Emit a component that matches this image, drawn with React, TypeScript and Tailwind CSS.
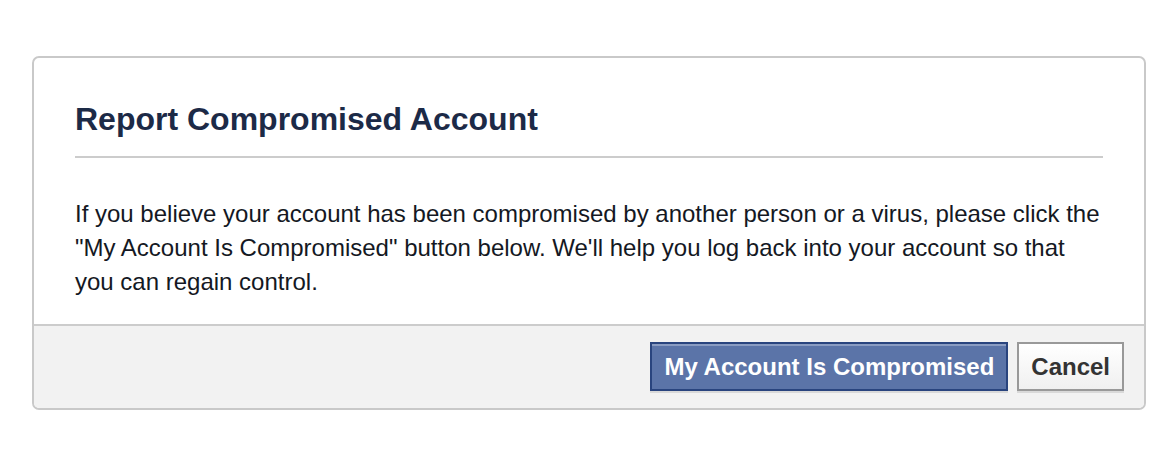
export default function App() {
  return (
    <div className="w-[1176px] h-[458px] bg-white pt-[56px] pl-[32px] font-['Liberation_Sans',Arial,sans-serif]">
      <div className="w-[1114px] h-[354px] border-2 border-[#c9c9c9] rounded-[7px] bg-white overflow-hidden flex flex-col">
        <div className="px-[41px] pt-[43px]">
          <h1 className="text-[32px] leading-[37px] font-bold text-[#1c2a47] pb-[18px] border-b-2 border-[#cccccc]">
            Report Compromised Account
          </h1>
          <p className="text-[24px] leading-[34px] text-[#141823] pt-[39px] whitespace-nowrap">
            If you believe your account has been compromised by another person or a virus, please click the
            <br />
            "My Account Is Compromised" button below. We'll help you log back into your account so that
            <br />
            you can regain control.
          </p>
        </div>
        <div className="mt-auto h-[84px] bg-[#f2f2f2] border-t-2 border-[#cccccc] flex justify-end items-start pt-[16px] pr-[20px] gap-[9px]">
          <button className="h-[49px] px-[12px] bg-[#5b74a8] border-2 border-[#29447e] shadow-[inset_0_2px_0_#8a9cc2,0_2px_0_#d9d9d9] text-white text-[24px] font-bold">
            My Account Is Compromised
          </button>
          <button className="h-[49px] px-[12px] bg-gradient-to-b from-[#ffffff] to-[#f0f0f0] border-2 border-[#999999] shadow-[0_2px_0_#d9d9d9] text-[#333333] text-[24px] font-bold">
            Cancel
          </button>
        </div>
      </div>
    </div>
  );
}
